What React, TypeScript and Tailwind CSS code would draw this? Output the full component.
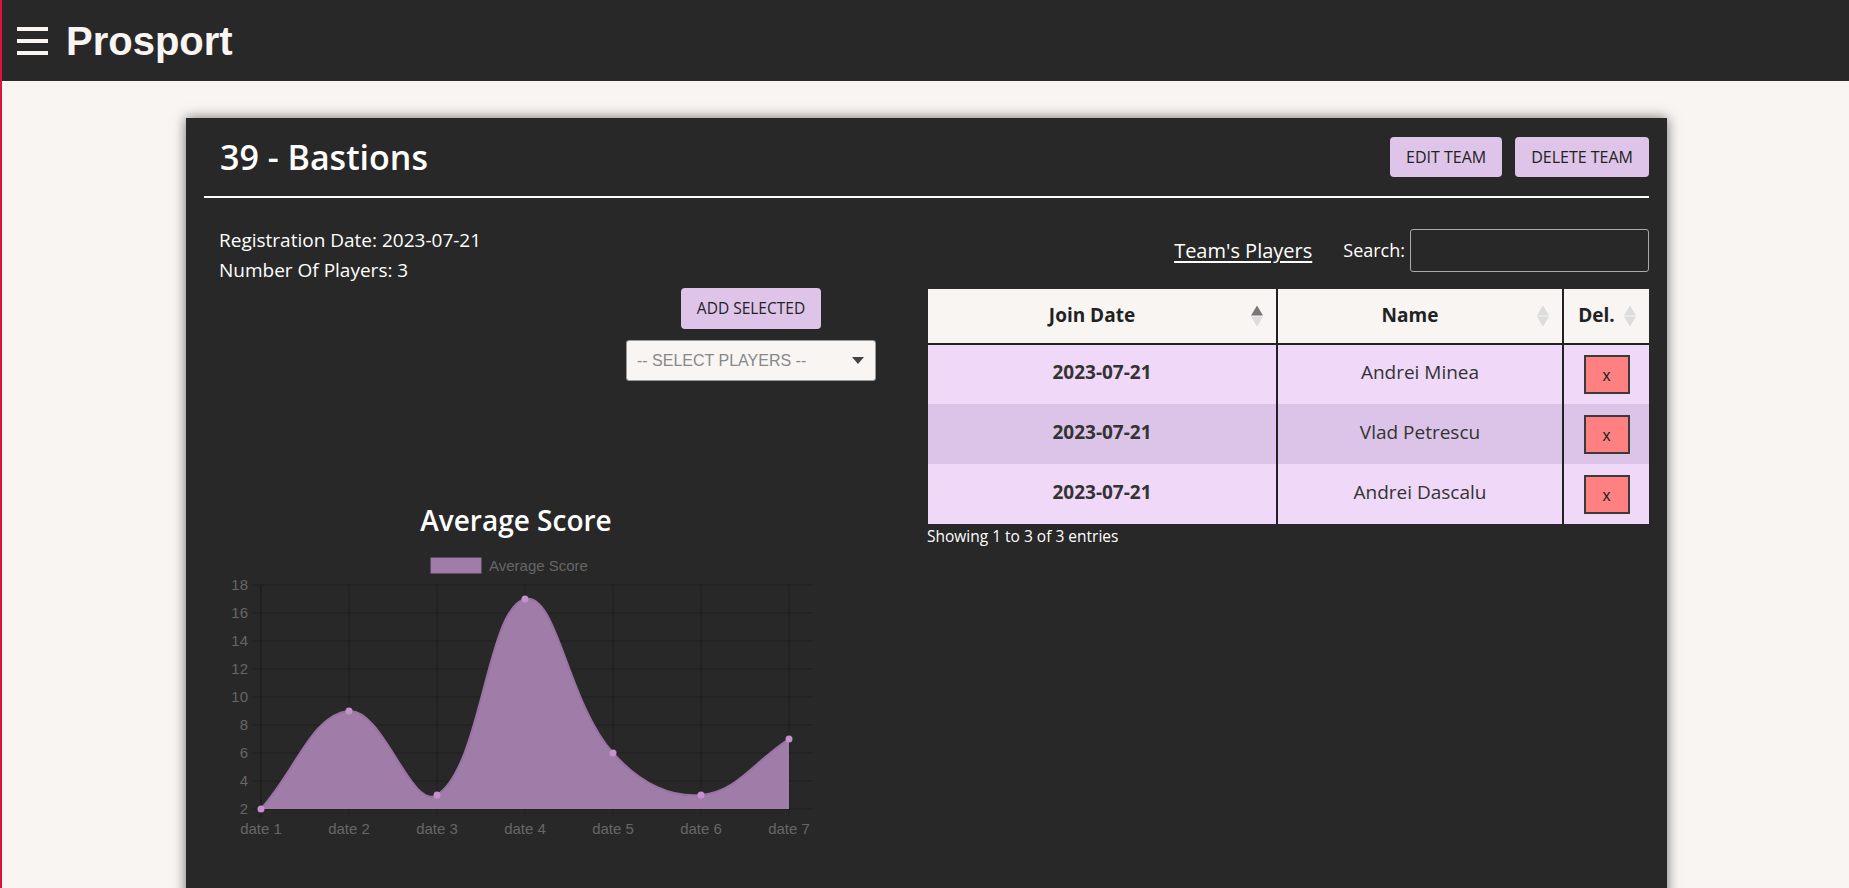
import React from 'react'

const scores = [2, 9, 3, 17, 6, 3, 7]
const dates = ['date 1', 'date 2', 'date 3', 'date 4', 'date 5', 'date 6', 'date 7']
const yTicks = [18, 16, 14, 12, 10, 8, 6, 4, 2]

const players = [
  { date: '2023-07-21', name: 'Andrei Minea' },
  { date: '2023-07-21', name: 'Vlad Petrescu' },
  { date: '2023-07-21', name: 'Andrei Dascalu' },
]

// chart area inside the svg
const X0 = 42
const STEP_X = 88
const Y_BOTTOM = 264
const PX_PER_UNIT = 14

const toY = (v: number) => Y_BOTTOM - (v - 2) * PX_PER_UNIT

// same spline chart.js uses for tension 0.4
function curvePath() {
  const pts = scores.map((v, i) => ({ x: X0 + i * STEP_X, y: toY(v) }))
  const cps = pts.map((cur, i) => {
    const prev = pts[i - 1] || cur
    const next = pts[i + 1] || cur
    const d01 = Math.hypot(cur.x - prev.x, cur.y - prev.y)
    const d12 = Math.hypot(next.x - cur.x, next.y - cur.y)
    const s01 = d01 / (d01 + d12) || 0
    const s12 = d12 / (d01 + d12) || 0
    const fa = 0.4 * s01
    const fb = 0.4 * s12
    return {
      prev: { x: cur.x - fa * (next.x - prev.x), y: cur.y - fa * (next.y - prev.y) },
      next: { x: cur.x + fb * (next.x - prev.x), y: cur.y + fb * (next.y - prev.y) },
    }
  })
  let d = `M ${pts[0].x} ${pts[0].y}`
  for (let i = 1; i < pts.length; i++) {
    const a = cps[i - 1].next
    const b = cps[i].prev
    d += ` C ${a.x} ${a.y} ${b.x} ${b.y} ${pts[i].x} ${pts[i].y}`
  }
  return { d, pts }
}

function ScoreChart() {
  const { d, pts } = curvePath()
  const last = pts[pts.length - 1]
  const area = `${d} L ${last.x} ${Y_BOTTOM} L ${pts[0].x} ${Y_BOTTOM} Z`

  return (
    <div className="ml-[15px] w-[594px]">
      <div className="h-[40px] text-center text-[28px] font-semibold leading-[40px] text-white">Average Score</div>
      <svg width="594" height="300" viewBox="0 0 594 300" className="mt-[5px] block" style={{ fontFamily: '"Liberation Sans", Arial, sans-serif' }}>
        {/* legend */}
        <rect x="212" y="13" width="50" height="15" fill="#a07da8" stroke="#9a72a3" strokeWidth="1" />
        <text x="270" y="25.5" fontSize="15" fill="#666">Average Score</text>

        {/* grid */}
        {yTicks.map((t, k) => (
          <line key={t} x1={X0 - 8} x2="594" y1={40 + k * 28} y2={40 + k * 28} stroke="#1f1f1f" strokeWidth="1" />
        ))}
        {dates.map((_, i) => (
          <line key={i} x1={X0 + i * STEP_X} x2={X0 + i * STEP_X} y1="40" y2={Y_BOTTOM + 8} stroke={i === 0 ? '#161616' : '#1f1f1f'} strokeWidth="1" />
        ))}

        {/* y labels */}
        {yTicks.map((t, k) => (
          <text key={t} x="29" y={45 + k * 28} fontSize="15" fill="#666" textAnchor="end">{t}</text>
        ))}

        {/* area */}
        <path d={area} fill="#a07da8" />
        <path d={d} fill="none" stroke="#9a72a3" strokeWidth="2" />
        {pts.map((p, i) => (
          <circle key={i} cx={p.x} cy={p.y} r="3.5" fill="#c690cf" />
        ))}

        {/* x labels */}
        {dates.map((l, i) => (
          <text key={l} x={X0 + i * STEP_X} y="289" fontSize="15" fill="#666" textAnchor="middle">{l}</text>
        ))}
      </svg>
    </div>
  )
}

function SortIcon({ active }: { active?: boolean }) {
  return (
    <svg width="12" height="21" viewBox="0 0 12 21" className="absolute right-[13px] top-1/2 -translate-y-1/2">
      <polygon points="6,0 12,10 0,10" fill={active ? '#777' : '#dcdcdc'} />
      <polygon points="0,11 12,11 6,21" fill="#dcdcdc" />
    </svg>
  )
}

export default function App() {
  return (
    <div className="h-[888px] overflow-hidden border-l-2 border-[#dc143c] bg-[#f8f5f3]" style={{ fontFamily: '"Open Sans", "Noto Sans", sans-serif' }}>
      {/* Navbar */}
      <nav className="flex h-[81px] items-center bg-[#282828] pl-[15px]">
        <div className="flex flex-col gap-[8px]">
          <span className="block h-[4px] w-[31px] bg-[#f8f5f3]"></span>
          <span className="block h-[4px] w-[31px] bg-[#f8f5f3]"></span>
          <span className="block h-[4px] w-[31px] bg-[#f8f5f3]"></span>
        </div>
        <span className="ml-[18px] text-[40px] font-bold leading-none text-[#f8f5f3]" style={{ fontFamily: '"Liberation Sans", Arial, sans-serif' }}>
          Prosport
        </span>
      </nav>

      {/* Team card */}
      <div className="ml-[184px] mt-[37px] min-h-[800px] w-[1481px] bg-[#282828] px-[18px] pt-[18px] shadow-[0_0_12px_rgba(0,0,0,0.55)]">
        <div className="flex h-[42px] items-center justify-between">
          <h2 className="ml-4 text-[34px] font-semibold leading-none text-white">39 - Bastions</h2>
          <div className="flex gap-[13px]">
            <button className="h-[40px] rounded-[4px] bg-[#dfc4ea] px-4 text-[16px] uppercase text-[#222]">Edit Team</button>
            <button className="h-[40px] rounded-[4px] bg-[#dfc4ea] px-4 text-[16px] uppercase text-[#222]">Delete Team</button>
          </div>
        </div>
        <div className="mt-[18px] h-[2px] bg-white"></div>

        <div className="flex gap-[52px] pt-[27px]">
          {/* Left column */}
          <div className="w-[672px] shrink-0">
            <div className="pl-[15px] text-[19px] leading-[30px] text-white">
              <p>Registration Date: 2023-07-21</p>
              <p>Number Of Players: 3</p>
            </div>
            <div className="mt-[3px] flex justify-end">
              <div className="flex w-[250px] flex-col items-center">
                <button className="h-[41px] rounded-[4px] bg-[#dfc4ea] px-4 text-[15.5px] uppercase text-[#222]">Add Selected</button>
                <div className="mt-[11px] flex h-[41px] w-[250px] items-center justify-between rounded-[3px] border border-[#999] bg-[#f8f5f3] pl-[10px] pr-[11px]">
                  <span className="text-[16px] text-[#888]" style={{ fontFamily: '"Liberation Sans", Arial, sans-serif' }}>-- SELECT PLAYERS --</span>
                  <svg width="12" height="7" viewBox="0 0 12 7">
                    <polygon points="0,0 12,0 6,7" fill="#444" />
                  </svg>
                </div>
              </div>
            </div>
            <div className="mt-[119px]">
              <ScoreChart />
            </div>
          </div>

          {/* Right column */}
          <div className="mt-[4px] flex-1">
            <div className="flex h-[43px] items-center justify-end">
              <a className="text-[20px] text-white underline underline-offset-[3px]">Team's Players</a>
              <label className="ml-[31px] text-[18px] text-white">Search:</label>
              <input className="ml-[5px] h-[43px] w-[239px] rounded-[3px] border border-[#aaa] bg-transparent" />
            </div>

            <table className="mt-[17px] w-full table-fixed border-collapse">
              <colgroup>
                <col className="w-[349px]" />
                <col className="w-[286px]" />
                <col />
              </colgroup>
              <thead>
                <tr className="h-[55px] bg-[#f8f5f3] text-[19px] font-bold text-[#222]">
                  <th className="relative border-r-2 border-b-2 border-[#222] pb-[2px] pl-[10px] pr-[30px]">
                    Join Date
                    <SortIcon active />
                  </th>
                  <th className="relative border-r-2 border-b-2 border-[#222] pb-[2px] pl-[10px] pr-[30px]">
                    Name
                    <SortIcon />
                  </th>
                  <th className="relative border-b-2 border-[#222] pb-[2px] pl-[10px] pr-[30px]">
                    Del.
                    <SortIcon />
                  </th>
                </tr>
              </thead>
              <tbody>
                {players.map((p, i) => (
                  <tr key={p.name} className={`h-[60px] text-[19px] text-[#333] ${i % 2 === 1 ? 'bg-[#dcc4e8]' : 'bg-[#f0d8f8]'}`}>
                    <td className="border-r-2 border-[#222] pb-[4px] text-center font-bold">{p.date}</td>
                    <td className="border-r-2 border-[#222] pb-[4px] text-center">{p.name}</td>
                    <td className="text-center">
                      <button className="h-[39px] w-[46px] border-2 border-[#3a3a3a] bg-[#ff8080] pt-[3px] text-[16px] leading-none text-[#222]" style={{ fontFamily: '"Liberation Sans", Arial, sans-serif' }}>
                        x
                      </button>
                    </td>
                  </tr>
                ))}
              </tbody>
            </table>
            <p className="-ml-px text-[15.5px] leading-[24px] text-white">Showing 1 to 3 of 3 entries</p>
          </div>
        </div>
      </div>
    </div>
  )
}
